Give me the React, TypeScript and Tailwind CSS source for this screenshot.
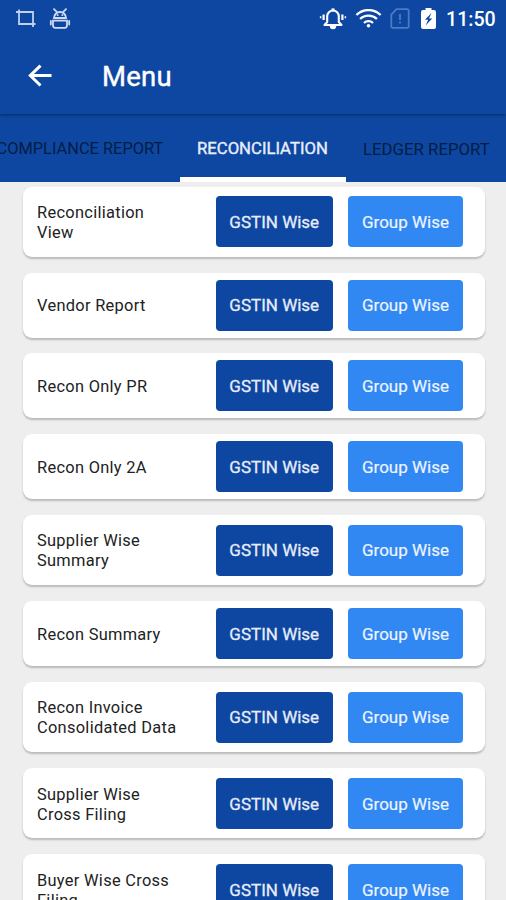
import { useState } from 'react';

const TABS = [
  { name: 'COMPLIANCE REPORT', box: 'w-[200px]', text: 'w-[167px] text-[16.4px]' },
  { name: 'RECONCILIATION', box: 'w-[166px]', text: 'w-[132px] text-[16.7px]' },
  { name: 'LEDGER REPORT', box: 'w-[160px]', text: 'w-[126px] text-[16.8px]' },
];

const REPORTS = [
  ['Reconciliation', 'View'],
  ['Vendor Report'],
  ['Recon Only PR'],
  ['Recon Only 2A'],
  ['Supplier Wise', 'Summary'],
  ['Recon Summary'],
  ['Recon Invoice', 'Consolidated Data'],
  ['Supplier Wise', 'Cross Filing'],
  ['Buyer Wise Cross', 'Filing'],
];

function StatusBar() {
  return (
    <div className="flex h-[37px] items-center text-white">
      <svg className="ml-[15px] h-5 w-[22px] text-[#c3d0f0]" viewBox="0 0 22 20" fill="none" stroke="currentColor" strokeWidth="1.8">
        <path d="M1 3h17v12.5M4 .5v14.5h16.5M18 15.5v2.5" />
      </svg>
      <svg className="ml-[12px] h-[22px] w-[22px] text-[#d0daf5]" viewBox="0 0 22 22" fill="none" stroke="currentColor" strokeWidth="1.8">
        <path d="M5 10a6 6 0 0 1 12 0zM5 1.2l3 3M17 1.2l-3 3M4 12.6h14v5q0 2.2-2.2 2.2H6.200q-2.200 0-2.200-2.200zM1.800 13v3.500M20.200 13v3.500" strokeLinecap="round" />
        <path d="M7.800 7.200h1.700M12.500 7.200h1.700" />
      </svg>
      <svg className="ml-auto h-[22px] w-[28px]" viewBox="0 0 28 22" fill="none" stroke="currentColor" strokeWidth="2.1">
        <path d="M5.5 17h17l-2.700-3V8.300a5.800 5.800 0 0 0-11.600 0V14z" strokeLinejoin="round" />
        <path d="M14 .4v3" strokeWidth="3" />
        <path d="M4.600 6.500v5.500M23.400 6.500v5.500" strokeWidth="2.200" />
        <path d="M1.600 8.300v2M26.400 8.300v2" strokeWidth="1.500" />
        <path d="M10.800 18a3.200 3.200 0 0 0 6.400 0z" fill="currentColor" stroke="none" />
      </svg>
      <svg className="ml-[8px] h-[20px] w-[27px]" viewBox="0 0 27 20" fill="none" stroke="currentColor" strokeWidth="2.300">
        <path d="M1.400 6a17.300 17.300 0 0 1 24.200 0M5.100 10a12 12 0 0 1 16.800 0M9 14a6.500 6.500 0 0 1 9 0" />
        <circle cx="13.500" cy="16.800" r="1.800" fill="currentColor" stroke="none" />
      </svg>
      <svg className="ml-[8px] h-[21px] w-[20px] text-[#4e79c4]" viewBox="0 0 20 21" fill="none" stroke="currentColor" strokeWidth="1.800">
        <path d="M6.500 1.200h10.700q1.500 0 1.500 1.500v15.600q0 1.500-1.500 1.500H2.800q-1.500 0-1.500-1.500V6.500z" />
        <path d="M10 6v6M10 13.500v2" />
      </svg>
      <svg className="ml-[11px] h-[21px] w-[15px]" viewBox="0 0 15 21">
        <path d="M4.500 0h6v2H13q2 0 2 2v15q0 2-2 2H2q-2 0-2-2V4q0-2 2-2h2.500z" fill="currentColor" />
        <path d="M10.500 5L4 11.700h3.200L4.600 17.500 11.200 10.400H8z" fill="#0d47a1" />
      </svg>
      <span className="mr-[11px] ml-[10px] w-[49px] whitespace-nowrap pt-[2px] text-[19.600px] font-medium leading-none">11:50</span>
    </div>
  );
}

export default function App() {
  const [active, setActive] = useState('RECONCILIATION');

  return (
    <div className="flex h-[900px] w-[506px] flex-col overflow-hidden bg-[#eeeeee] font-[Roboto,sans-serif]">
      <header className="z-10 h-[114px] shrink-0 bg-[#0d47a1] shadow-[0_1px_3px_rgba(0,0,0,0.4)]">
        <StatusBar />
        <div className="flex h-[77px] items-center text-white">
          <button className="ml-[28px] h-[24px] w-[24px]" aria-label="Back">
            <svg viewBox="0 0 24 24" fill="none" stroke="currentColor" strokeWidth="3">
              <path d="M23.5 11.5H3M12.5 1.7L2.3 11.5l10.2 10" />
            </svg>
          </button>
          <h1 className="ml-[50px] pt-[3px] text-[27.5px] leading-none tracking-[0.2px] [-webkit-text-stroke:0.4px_white]">Menu</h1>
        </div>
      </header>

      <nav className="flex h-[67.5px] shrink-0 bg-[#0d47a1]">
        <div className="-ml-5 flex">
          {TABS.map((tab) => (
            <button
              key={tab.name}
              onClick={() => setActive(tab.name)}
              className={`flex shrink-0 items-start justify-center border-b-[5px] pt-[24px] ${tab.box} ${
                active === tab.name
                  ? 'border-white text-[#e8edfa] [-webkit-text-stroke:0.4px_#e8edfa]'
                  : 'border-transparent text-[#051d43]'
              }`}
            >
              <span className={`whitespace-nowrap text-left leading-[22px] ${tab.text}`}>{tab.name}</span>
            </button>
          ))}
        </div>
      </nav>

      <main className="flex flex-col gap-[15.9px] px-[23px] pt-[5px]">
        {REPORTS.map((lines) => (
          <div
            key={lines.join(' ')}
            className={`flex w-[461.5px] shrink-0 items-center rounded-[9px] bg-white pl-[14px] shadow-[0_2px_2px_rgba(0,0,0,0.22)] ${
              lines.length > 1 ? 'h-[70.4px]' : 'h-[64.8px]'
            }`}
          >
            <div className="w-[178.5px] shrink-0 pt-[2.6px] text-[16.4px] leading-[20px] tracking-[0.3px] text-[#222222]">
              {lines.map((line) => (
                <div key={line}>{line}</div>
              ))}
            </div>
            <button className="h-[51px] w-[117.5px] rounded-[4px] bg-[#0d47a1] pt-[2px] text-[17px] text-[#e8edfa] [-webkit-text-stroke:0.3px_#e8edfa]">
              GSTIN Wise
            </button>
            <button className="ml-[15px] h-[51px] w-[115px] rounded-[4px] bg-[#3288f3] pt-[2px] text-[17px] text-[#edf4ff] [-webkit-text-stroke:0.2px_#edf4ff]">
              Group Wise
            </button>
          </div>
        ))}
      </main>
    </div>
  );
}
